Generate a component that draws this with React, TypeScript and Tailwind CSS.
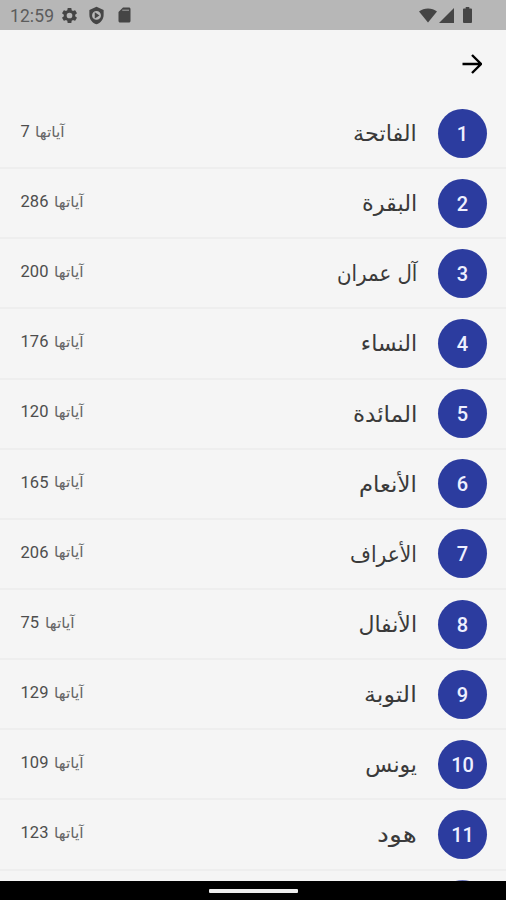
import { useLayoutEffect, useRef } from 'react';

type Surah = { name: string; width: number; verses: number };

const surahs: Surah[] = [
  { name: 'الفاتحة', width: 64, verses: 7 },
  { name: 'البقرة', width: 55, verses: 286 },
  { name: 'آل عمران', width: 80, verses: 200 },
  { name: 'النساء', width: 56, verses: 176 },
  { name: 'المائدة', width: 64, verses: 120 },
  { name: 'الأنعام', width: 58, verses: 165 },
  { name: 'الأعراف', width: 67, verses: 206 },
  { name: 'الأنفال', width: 59, verses: 75 },
  { name: 'التوبة', width: 53, verses: 129 },
  { name: 'يونس', width: 52, verses: 109 },
  { name: 'هود', width: 40, verses: 123 },
];

/* Condenses or widens a run of Arabic text to the given width. */
function Fitted({ text, width, className }: { text: string; width: number; className: string }) {
  const ref = useRef<HTMLSpanElement>(null);
  useLayoutEffect(() => {
    const el = ref.current;
    if (el && el.offsetWidth) el.style.transform = `scaleX(${width / el.offsetWidth})`;
  }, [text, width]);
  return (
    <span className="flex justify-start" style={{ width }} dir="rtl">
      <span ref={ref} className={`block shrink-0 origin-right whitespace-nowrap ${className}`}>{text}</span>
    </span>
  );
}

function StatusBar() {
  return (
    <header className="flex h-[30px] shrink-0 items-center bg-[#b7b7b7] pr-[34px] pl-[10px] text-[#454545]">
      <span className="w-[50px] pt-[3px] text-[17.5px] leading-none tracking-[0.1px] text-[#5c5c5c]">12:59</span>
      <svg className="h-[19px] w-[19px]" viewBox="0 0 24 24" fill="currentColor">
        <path d="M19.14 12.94c.04-.3.06-.61.06-.94s-.02-.64-.07-.94l2.03-1.58a.49.49 0 0 0 .12-.61l-1.92-3.32a.49.49 0 0 0-.59-.22l-2.39.96c-.5-.38-1.03-.7-1.62-.94l-.36-2.54A.48.48 0 0 0 13.92 2.4h-3.84a.47.47 0 0 0-.47.41l-.36 2.54c-.59.24-1.13.57-1.62.94l-2.39-.96a.48.48 0 0 0-.59.22L2.74 8.87a.47.47 0 0 0 .12.61l2.03 1.58c-.05.3-.09.63-.09.94s.02.64.07.94l-2.03 1.58a.49.49 0 0 0-.12.61l1.92 3.32c.12.22.37.29.59.22l2.39-.96c.5.38 1.03.7 1.62.94l.36 2.54c.05.24.24.41.48.41h3.84c.24 0 .44-.17.47-.41l.36-2.54c.59-.24 1.13-.56 1.62-.94l2.39.96c.22.08.47 0 .59-.22l1.92-3.32a.47.47 0 0 0-.12-.61zM12 15.6a3.6 3.6 0 1 1 0-7.2 3.6 3.6 0 0 1 0 7.2z" />
      </svg>
      <svg className="ml-[8px] h-[19px] w-[19px]" viewBox="0 0 24 24" fill="currentColor">
        <path fillRule="evenodd" d="M12 1 3 5v6c0 5.55 3.84 10.74 9 12 5.16-1.26 9-6.45 9-12V5zM12 6.3a5.600 5.600 0 1 1 0 11.200 5.600 5.600 0 0 1 0-11.200z" />
        <path d="m9.800 8 6 3.900-6 3.900z" />
      </svg>
      <svg className="ml-[9px] h-[18px] w-[19px]" viewBox="0 0 24 24" fill="currentColor">
        <path d="M18 2h-8L4.02 8 4 20c0 1.100.9 2 2 2h12c1.100 0 2-.9 2-2V4c0-1.100-.9-2-2-2z" />
        <path d="M9 5.700h9" stroke="#858585" strokeWidth="2" />
      </svg>
      <span className="flex-1" />
      <svg className="h-[15px] w-[18px]" viewBox="0 0 18 15" fill="currentColor">
        <path d="M0 3.500C5-.6 13-.6 18 3.500L9 14.500z" />
      </svg>
      <svg className="ml-[2px] h-[15px] w-[15px]" viewBox="0 0 15 15" fill="currentColor">
        <path d="M15 0v15H0z" />
      </svg>
      <svg className="ml-[9px] h-[16px] w-[9px]" viewBox="0 0 10 16" preserveAspectRatio="none" fill="currentColor">
        <path d="M3 0h4v1.500h2q1 0 1 1V15q0 1-1 1H1q-1 0-1-1V2.500q0-1 1-1h2z" />
      </svg>
    </header>
  );
}

function SurahRow({ surah, index }: { surah: Surah; index: number }) {
  return (
    <li className="flex h-[70.15px] shrink-0 items-center border-b-2 border-[#eeeeee] pr-[19px] pl-[20.5px]">
      <span className="-mt-[2px] flex flex-1 items-center gap-[5px] text-[#4d4d4d]">
        <span className="text-[16.5px] leading-none tracking-[0.1px]">{surah.verses}</span>
        <Fitted text="آياتها" width={30} className="font-['DejaVu_Sans'] text-[15px] leading-none text-[#666666]" />
      </span>
      <Fitted text={surah.name} width={surah.width} className="pt-[2px] font-['DejaVu_Sans'] text-[22px] leading-none text-[#3a3a3a]" />
      <span className="ml-[21px] flex size-[49px] items-center justify-center rounded-full bg-[#2c3c9f] pt-[1px] text-[20px] font-medium text-[#eef0ff]">
        {index}
      </span>
    </li>
  );
}

export default function App() {
  return (
    <div className="flex h-[900px] w-[506px] flex-col overflow-hidden bg-[#f5f5f5] font-['Roboto',sans-serif]">
      <StatusBar />
      <nav className="flex h-[69px] shrink-0 items-center justify-end pr-[24px] pb-[1px]">
        <svg className="h-[20px] w-[20px]" viewBox="0 0 20 20" fill="none" stroke="#000" strokeWidth="2.400">
          <path d="M0.500 10h18M10 1l9 9-9 9" />
        </svg>
      </nav>
      <ul className="flex min-h-0 flex-1 flex-col overflow-hidden">
        {surahs.map((surah, i) => (
          <SurahRow key={surah.name} surah={surah} index={i + 1} />
        ))}
        <li className="flex shrink-0 justify-end pt-[9.800px] pr-[19px]">
          <span className="size-[49px] rounded-full bg-[#2c3c9f]/70" />
        </li>
      </ul>
      <footer className="flex h-[19px] shrink-0 items-center justify-center bg-black">
        <span className="h-[4px] w-[89px] rounded-[1px] bg-[#eeeeee]" />
      </footer>
    </div>
  );
}
